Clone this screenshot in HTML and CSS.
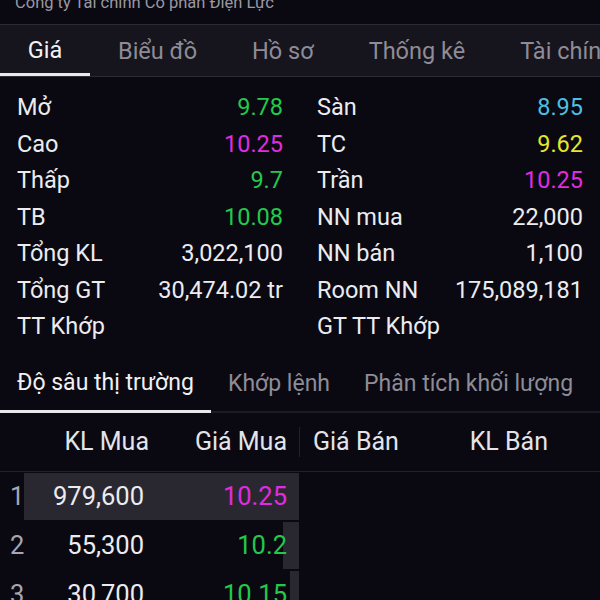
FILE: index.html
```html
<!DOCTYPE html>
<html lang="vi">
  <head>
    <meta charset="UTF-8" />
    <meta name="viewport" content="width=device-width, initial-scale=1.0" />
    <title>Giá - Điện Lực</title>
    <link rel="stylesheet" href="styles.css">
  </head>
  <body>
    <div class="company">
      <span>Công ty Tài chính Cổ phần Điện Lực</span>
    </div>

    <div class="tabs">
      <div class="tab active">Giá</div>
      <div class="tab">Biểu đồ</div>
      <div class="tab">Hồ sơ</div>
      <div class="tab">Thống kê</div>
      <div class="tab">Tài chính</div>
    </div>

    <div class="stats">
      <div class="stat-col">
        <div class="stat"><span>Mở</span><span class="green">9.78</span></div>
        <div class="stat"><span>Cao</span><span class="purple">10.25</span></div>
        <div class="stat"><span>Thấp</span><span class="green">9.7</span></div>
        <div class="stat"><span>TB</span><span class="green">10.08</span></div>
        <div class="stat"><span>Tổng KL</span><span>3,022,100</span></div>
        <div class="stat"><span>Tổng GT</span><span>30,474.02 tr</span></div>
        <div class="stat"><span>TT Khớp</span><span></span></div>
      </div>
      <div class="stat-col">
        <div class="stat"><span>Sàn</span><span class="blue">8.95</span></div>
        <div class="stat"><span>TC</span><span class="yellow">9.62</span></div>
        <div class="stat"><span>Trần</span><span class="purple">10.25</span></div>
        <div class="stat"><span>NN mua</span><span>22,000</span></div>
        <div class="stat"><span>NN bán</span><span>1,100</span></div>
        <div class="stat"><span>Room NN</span><span>175,089,181</span></div>
        <div class="stat"><span>GT TT Khớp</span><span></span></div>
      </div>
    </div>

    <div class="subtabs">
      <div class="subtab active">Độ sâu thị trường</div>
      <div class="subtab">Khớp lệnh</div>
      <div class="subtab">Phân tích khối lượng</div>
    </div>

    <div class="depth-head">
      <div class="half buy">
        <span class="idx"></span>
        <span class="vol">KL Mua</span>
        <span class="price">Giá Mua</span>
      </div>
      <div class="half sell">
        <span class="price">Giá Bán</span>
        <span class="vol">KL Bán</span>
      </div>
    </div>

    <div class="depth">
      <div class="depth-row">
        <div class="half buy">
          <div class="bar" style="width: 275px"></div>
          <span class="idx">1</span>
          <span class="vol">979,600</span>
          <span class="price purple">10.25</span>
        </div>
        <div class="half sell"></div>
      </div>
      <div class="depth-row">
        <div class="half buy">
          <div class="bar" style="width: 16px"></div>
          <span class="idx">2</span>
          <span class="vol">55,300</span>
          <span class="price green">10.2</span>
        </div>
        <div class="half sell"></div>
      </div>
      <div class="depth-row">
        <div class="half buy">
          <div class="bar" style="width: 9px"></div>
          <span class="idx">3</span>
          <span class="vol">30,700</span>
          <span class="price green">10.15</span>
        </div>
        <div class="half sell"></div>
      </div>
    </div>
  </body>
</html>
```

FILE: styles.css
```css
body {
  font-family: Roboto, "Liberation Sans", sans-serif;
  background-color: #0a0912;
  color: #ececf0;
  margin: 0;
  overflow: hidden;
}

.company {
  height: 24px;
  overflow: hidden;
  padding-left: 15px;
  color: #9a98a2;
  font-size: 16.5px;
}

.company span {
  display: block;
  margin-top: -7px;
}

.tabs {
  display: flex;
  height: 51px;
  background-color: #16141d;
  border-top: 1px solid #2c2a34;
  border-bottom: 1px solid #2c2a34;
  overflow: hidden;
  white-space: nowrap;
}

.tab {
  flex-shrink: 0;
  display: flex;
  align-items: center;
  padding: 0 27px 0 28px;
  font-size: 23.5px;
  color: #8e8c96;
  box-sizing: border-box;
}

.tab.active {
  color: #f2f2f5;
  width: 90px;
  justify-content: center;
  padding: 2px 0 0;
  border-bottom: 3px solid #e8e8ec;
}

.stats {
  display: flex;
  margin-top: 12px;
}

.stat-col {
  flex: 1;
  padding: 0 17px;
}

.stat {
  display: flex;
  justify-content: space-between;
  align-items: center;
  height: 36.5px;
  font-size: 23.5px;
}

.green {
  color: #22c94a;
}

.purple {
  color: #e02ce0;
}

.blue {
  color: #4cbfe0;
}

.yellow {
  color: #e6e62a;
}

.subtabs {
  display: flex;
  margin-top: 11px;
  height: 55px;
  border-bottom: 2px solid #1d1b25;
  white-space: nowrap;
}

.subtab {
  display: flex;
  align-items: center;
  padding: 0 17px;
  font-size: 23px;
  color: #8e8c96;
}

.subtab.active {
  color: #f0f0f4;
  padding-left: 17px;
  width: 211px;
  box-sizing: border-box;
  border-bottom: 3px solid #e8e8ec;
  margin-bottom: -2px;
}

.depth-head {
  display: flex;
  height: 58px;
  border-bottom: 1px solid #22202a;
  font-size: 25px;
  color: #e4e4e8;
}

.half {
  width: 300px;
  display: flex;
  align-items: center;
  position: relative;
}

.depth-head .buy::after {
  content: "";
  position: absolute;
  right: 0;
  top: 14px;
  bottom: 14px;
  border-right: 1px solid #23212b;
}

.idx {
  width: 24px;
  padding-left: 10px;
  box-sizing: border-box;
  color: #a8a6b0;
  position: relative;
}

.buy .vol {
  width: 125px;
  text-align: right;
  position: relative;
}

.depth-row .buy .vol {
  width: 120px;
}

.buy .price {
  flex: 1;
  text-align: right;
  padding-right: 13px;
  position: relative;
}

.sell .price {
  padding-left: 13px;
}

.sell .vol {
  flex: 1;
  text-align: right;
  padding-right: 52px;
}

.depth {
  display: flex;
  flex-direction: column;
  gap: 2px;
  padding-top: 1px;
}

.depth-row {
  display: flex;
  height: 47px;
  font-size: 25.5px;
}

.bar {
  position: absolute;
  top: 0;
  bottom: 0;
  right: 1px;
  background-color: #292831;
}
```
